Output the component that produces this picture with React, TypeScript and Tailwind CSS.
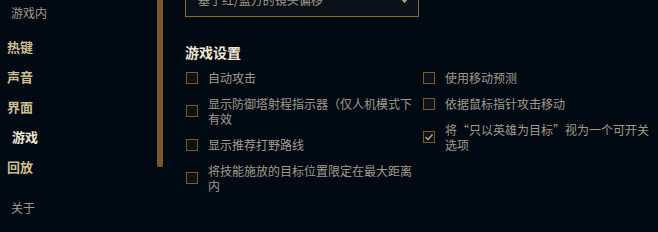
import React from "react";

const font = { fontFamily: '"Noto Sans CJK SC", "Noto Sans", sans-serif' };

type Item = { label: string; checked?: boolean };

const col1: Item[] = [
  { label: "自动攻击" },
  { label: "显示防御塔射程指示器（仅人机模式下有效" },
  { label: "显示推荐打野路线" },
  { label: "将技能施放的目标位置限定在最大距离内" },
];

const col2: Item[] = [
  { label: "使用移动预测" },
  { label: "依据鼠标指针攻击移动" },
  { label: "将“只以英雄为目标”视为一个可开关选项", checked: true },
];

function Check({ item }: { item: Item }) {
  return (
    <div className="flex items-center gap-[10px]">
      <div className="ml-px w-[12px] h-[12px] shrink-0 border border-[#785a28] bg-[#0c1218] flex items-center justify-center">
        {item.checked && (
          <svg width="10" height="10" viewBox="0 0 10 10">
            <polyline points="1.5,5 4,7.5 8.5,2.5" fill="none" stroke="#c8aa6e" strokeWidth="1.4" />
          </svg>
        )}
      </div>
      <div className="w-[212px] text-[12px] leading-[15px] text-[#a09b8c]">{item.label}</div>
    </div>
  );
}

export default function App() {
  return (
    <div lang="zh-CN" style={font} className="w-[658px] h-[232px] bg-[#010a13] overflow-hidden flex">
      <div className="w-[157px] shrink-0 flex flex-col">
        <div className="h-[25px] leading-[25px] pl-[11px] text-[12px] text-[#a09b8c]">游戏内</div>
        <div className="mt-[7px] h-[30px] leading-[30px] pl-[7px] text-[13px] font-bold text-[#cdbe91]">热键</div>
        <div className="h-[30px] leading-[30px] pl-[7px] text-[13px] font-bold text-[#cdbe91]">声音</div>
        <div className="h-[30px] leading-[30px] pl-[7px] text-[13px] font-bold text-[#cdbe91]">界面</div>
        <div className="h-[30px] leading-[30px] pl-[12px] text-[13px] font-bold text-[#f0e6d2]">游戏</div>
        <div className="h-[30px] leading-[30px] pl-[7px] text-[13px] font-bold text-[#cdbe91]">回放</div>
        <div className="mt-[11px] h-[30px] leading-[30px] pl-[11px] text-[12px] text-[#a09b8c]">关于</div>
      </div>
      <div className="w-[6px] h-[167px] shrink-0 bg-[#785a28] rounded-b-[2px]" />
      <div className="pl-[22px] flex flex-col">
        <div className="-mt-[17px] w-[234px] h-[34px] border border-[#8a6a33] bg-[#0a1017] flex items-center justify-between pl-[12px] pr-[10px]">
          <span className="text-[12px] text-[#a09b8c]">基于红/蓝方的镜头偏移</span>
          <svg width="7" height="5" viewBox="0 0 7 5">
            <polyline points="0.8,0.8 3.5,3.8 6.2,0.8" fill="none" stroke="#c8aa6e" strokeWidth="1.6" />
          </svg>
        </div>
        <div className="mt-[25px] h-[20px] leading-[20px] text-[14px] font-bold text-[#f0e6d2]">游戏设置</div>
        <div className="mt-[8px] grid grid-cols-[237px_237px]">
          <div className="flex flex-col gap-[11px]">
            {col1.map((it) => (
              <Check key={it.label} item={it} />
            ))}
          </div>
          <div className="flex flex-col gap-[11px]">
            {col2.map((it) => (
              <Check key={it.label} item={it} />
            ))}
          </div>
        </div>
      </div>
    </div>
  );
}
